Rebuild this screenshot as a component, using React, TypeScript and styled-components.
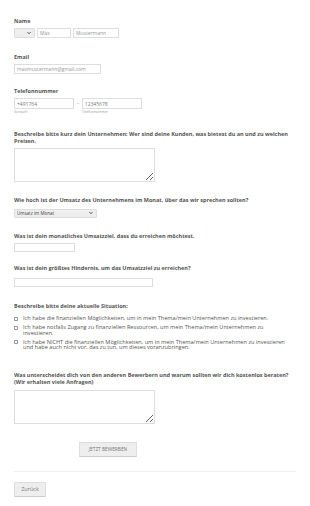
import React from 'react';
import styled, {createGlobalStyle} from "styled-components";

const GlobalStyle = createGlobalStyle`
  html, body {
    margin: 0;
    padding: 0;
    background: #fff;
  }
  body {
    font-family: "Open Sans", "DejaVu Sans", sans-serif;
    color: #555;
  }
`

const Page = styled.div`
  padding: 18px 14px 10px;
  width: 282px;
`

const Field = styled.div<{ $gap?: number }>`
  margin-bottom: ${p => p.$gap ?? 14}px;
`

const Label = styled.div<{ $mb?: number }>`
  font-size: 5.5px;
  line-height: 7px;
  font-weight: 700;
  color: #555;
  margin-bottom: ${p => p.$mb ?? 3}px;
`

const Row = styled.div`
  display: flex;
  align-items: flex-start;
  gap: 2px;
`

const Input = styled.input<{ $w: number; $h?: number }>`
  display: block;
  box-sizing: border-box;
  width: ${p => p.$w}px;
  height: ${p => p.$h ?? 10}px;
  margin: 0;
  border: 1px solid #ddd;
  padding: 0 2px;
  font-family: inherit;
  font-size: 5px;
  color: #777;
  outline: none;

  &::placeholder {
    color: #999;
  }
`

const SelectWrap = styled.div<{ $w: number; $h?: number }>`
  position: relative;
  width: ${p => p.$w}px;
  height: ${p => p.$h ?? 10}px;

  svg {
    position: absolute;
    right: 4px;
    top: 50%;
    transform: translateY(-50%);
  }
`

const Select = styled.select`
  display: block;
  appearance: none;
  box-sizing: border-box;
  width: 100%;
  height: 100%;
  margin: 0;
  border: 1px solid #ddd;
  border-radius: 1px;
  background: #eee;
  padding: 0 2px;
  font-family: inherit;
  font-size: 4.5px;
  color: #444;
  outline: none;
`

const Sub = styled.div`
  font-size: 3.5px;
  line-height: 4px;
  color: #999;
  margin-top: 0.5px;
`

const Dash = styled.span`
  font-size: 5.5px;
  line-height: 11px;
  color: #777;
  padding: 0 1px;
`

const TextArea = styled.textarea`
  box-sizing: border-box;
  width: 141px;
  height: 34px;
  margin: 0;
  border: 1px solid #ddd;
  display: block;
  resize: both;
  outline: none;
`

const CheckList = styled.div`
  display: flex;
  flex-direction: column;
  gap: 3.5px;
`

const Check = styled.label`
  display: flex;
  align-items: flex-start;
  gap: 5px;
  font-size: 5.6px;
  line-height: 5.5px;
  color: #555;
  padding-right: 2px;
`

const Box = styled.span`
  flex: none;
  box-sizing: border-box;
  width: 4px;
  height: 4px;
  margin-top: 0.8px;
  border: 0.6px solid #999;
  border-radius: 0.8px;
  background: #fff;
`

const Center = styled.div`
  display: flex;
  padding-left: 65px;
  margin-top: 18px;
`

const Button = styled.button<{ $w: number }>`
  display: block;
  box-sizing: border-box;
  width: ${p => p.$w}px;
  height: 15px;
  margin: 0;
  background: #eee;
  border: 1px solid #ddd;
  border-bottom-color: #ccc;
  border-radius: 1px;
  font-family: inherit;
  font-size: ${p => p.$w > 40 ? 4.8 : 5.5}px;
  color: #777;
  padding: 0;
  cursor: pointer;
`

const Rule = styled.hr`
  border: none;
  border-top: 1px solid #eee;
  margin: 14px 0 10px;
`

const Chevron = () => (
    <svg width="4" height="3" viewBox="0 0 8 6">
        <path d="M1 1.2 L4 4.4 L7 1.2" fill="none" stroke="#444" strokeWidth="1.8"/>
    </svg>
)

const situations = [
    'Ich habe die finanziellen Möglichkeiten, um in mein Thema/mein Unternehmen zu investieren.',
    'Ich habe notfalls Zugang zu finanziellen Ressourcen, um mein Thema/mein Unternehmen zu investieren.',
    'Ich habe NICHT die finanziellen Möglichkeiten, um in mein Thema/mein Unternehmen zu investieren und habe auch nicht vor, das zu tun, um dieses voranzubringen.',
]

export default function App() {
    return (
        <>
            <GlobalStyle/>
            <Page>
                <Field $gap={16}>
                    <Label>Name</Label>
                    <Row>
                        <SelectWrap $w={21}>
                            <Select defaultValue=""><option value=""></option></Select>
                            <Chevron/>
                        </SelectWrap>
                        <Input $w={34} placeholder="Max"/>
                        <Input $w={46} placeholder="Mustermann"/>
                    </Row>
                </Field>

                <Field $gap={14}>
                    <Label>Email</Label>
                    <Input $w={87} placeholder="maxmustermann@gmail.com"/>
                </Field>

                <Field $gap={17}>
                    <Label>Telefonnummer</Label>
                    <Row>
                        <div>
                            <Input $w={60} $h={11} defaultValue="+491764"/>
                            <Sub>Vorwahl</Sub>
                        </div>
                        <Dash>-</Dash>
                        <div>
                            <Input $w={60} $h={11} defaultValue="12345678"/>
                            <Sub>Telefonnummer</Sub>
                        </div>
                    </Row>
                </Field>

                <Field $gap={15}>
                    <Label>Beschreibe bitte kurz dein Unternehmen: Wer sind deine Kunden, was bietest du an und zu welchen Preisen.</Label>
                    <TextArea/>
                </Field>

                <Field $gap={15}>
                    <Label $mb={5}>Wie hoch ist der Umsatz des Unternehmens im Monat, über das wir sprechen sollten?</Label>
                    <SelectWrap $w={83} $h={9}>
                        <Select defaultValue="m"><option value="m">Umsatz im Monat</option></Select>
                        <Chevron/>
                    </SelectWrap>
                </Field>

                <Field $gap={13}>
                    <Label>Was ist dein monatliches Umsatzziel, dass du erreichen möchtest.</Label>
                    <Input $w={61} $h={9}/>
                </Field>

                <Field $gap={16}>
                    <Label $mb={6}>Was ist dein größtes Hindernis, um das Umsatzziel zu erreichen?</Label>
                    <Input $w={139} $h={9}/>
                </Field>

                <Field $gap={21}>
                    <Label $mb={6.5}>Beschreibe bitte deine aktuelle Situation:</Label>
                    <CheckList>
                        {situations.map((s, i) => (
                            <Check key={i}>
                                <Box/>
                                <span>{s}</span>
                            </Check>
                        ))}
                    </CheckList>
                </Field>

                <Field $gap={0}>
                    <Label $mb={4}>Was unterscheidet dich von den anderen Bewerbern und warum sollten wir dich kostenlos beraten? (Wir erhalten viele Anfragen)</Label>
                    <TextArea/>
                </Field>

                <Center>
                    <Button type="button" $w={58}>JETZT BEWERBEN</Button>
                </Center>

                <Rule/>

                <Button type="button" $w={32}>Zurück</Button>
            </Page>
        </>
    );
}
